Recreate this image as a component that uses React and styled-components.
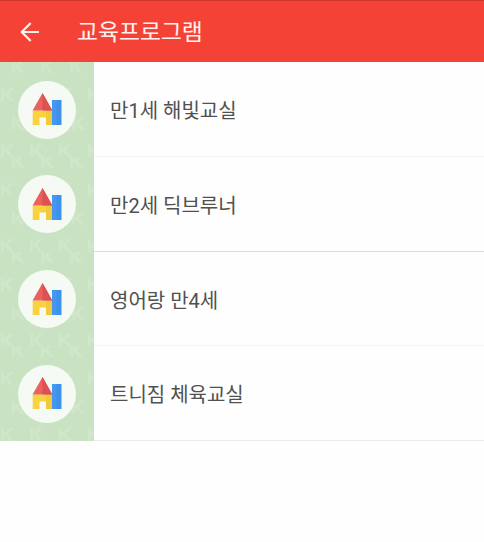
import React from 'react';
import styled, { createGlobalStyle } from 'styled-components'

const programs = [
    { name: '만1세 해빛교실', line: '#f3f3f3' },
    { name: '만2세 딕브루너', line: '#dcdcdc' },
    { name: '영어랑 만4세', line: '#f5f5f5' },
    { name: '트니짐 체육교실', line: '#ebecea' },
]

const marks = [
    [12, -2], [41, -2], [70, -2],
    [1, 26], [30, 26], [59, 26], [88, 26],
    [12, 55], [41, 55], [72, 55],
    [1, 82], [30, 82], [59, 82], [88, 82],
]

const Pattern = () => (
    <PatternSvg viewBox="0 0 94 95" preserveAspectRatio="none">
        {marks.map(([x, y]) => (
            <path
                key={`${x}-${y}`}
                transform={`translate(${x} ${y})`}
                d="M0 0h3v5l6-5h4L7 6l6 7H9L3 7.500v5.500H0z"
            />
        ))}
    </PatternSvg>
)

const House = () => (
    <svg width="30" height="33" viewBox="0 0 30 33">
        <path d="M20 7h9.300v25H20z" fill="#4597ef" />
        <path d="M24.700 7h4.600v25h-4.600z" fill="#3f91ea" />
        <path d="M.7 17.500H20V32h-6v-7.500H7.500V32H.7z" fill="#f9d33f" />
        <path d="M14 17.500h6V32h-6z" fill="#f2ca3c" />
        <path d="M10.500 0L20.300 17.500H.6z" fill="#ea625e" />
        <path d="M10.500 0L20.300 17.500h-9.800z" fill="#dc5152" />
    </svg>
)

const App = () => {
    return (
        <>
            <GlobalStyle />
            <Header>
                <BackButton aria-label="back">
                    <svg width="20" height="20" viewBox="0 0 20 20" fill="none" stroke="#fff0ec" strokeWidth="2.2">
                        <path d="M10.700 .9L1.700 10l9 9.100M2 10h17" />
                    </svg>
                </BackButton>
                <Title>교육프로그램</Title>
            </Header>
            <List>
                {programs.map((program) => (
                    <Row key={program.name}>
                        <Thumb>
                            <Pattern />
                            <Circle>
                                <House />
                            </Circle>
                        </Thumb>
                        <Name $line={program.line}>{program.name}</Name>
                    </Row>
                ))}
            </List>
        </>
    );
}

export default App;


const GlobalStyle = createGlobalStyle`
    * {
        box-sizing: border-box;
    }
    body {
        margin: 0;
        background: #fefefe;
        font-family: Roboto, "Noto Sans CJK KR", sans-serif;
    }
`

const Header = styled.header`
    height: 62.4px;
    display: flex;
    align-items: center;
    padding-left: 20px;
    background: #f44336;
    border-top: 1px solid #d0382b;
`

const BackButton = styled.button`
    display: flex;
    padding: 0;
    border: 0;
    background: none;
    cursor: pointer;
`

const Title = styled.h1`
    margin: 0 0 0 37px;
    padding-top: 2px;
    color: #fff3f0;
    font-size: 22.8px;
    font-weight: 400;
    line-height: 32px;
`

const List = styled.ul`
    margin: 0;
    padding: 0;
    list-style: none;
`

const Row = styled.li`
    height: 94.7px;
    display: flex;
`

const Thumb = styled.div`
    position: relative;
    width: 94px;
    display: flex;
    align-items: center;
    justify-content: center;
    background: #c8e2c2;
    overflow: hidden;
`

const PatternSvg = styled.svg`
    position: absolute;
    inset: 0;
    width: 100%;
    height: 100%;
    fill: #cfe6c9;
`

const Circle = styled.div`
    position: relative;
    width: 58px;
    height: 58px;
    display: flex;
    align-items: center;
    justify-content: center;
    border-radius: 50%;
    background: #f5faf4;
`

const Name = styled.div`
    flex: 1;
    display: flex;
    align-items: center;
    padding: 1px 0 0 16px;
    color: #50504e;
    font-size: 20px;
    border-bottom: 1px solid ${props => props.$line};
`
